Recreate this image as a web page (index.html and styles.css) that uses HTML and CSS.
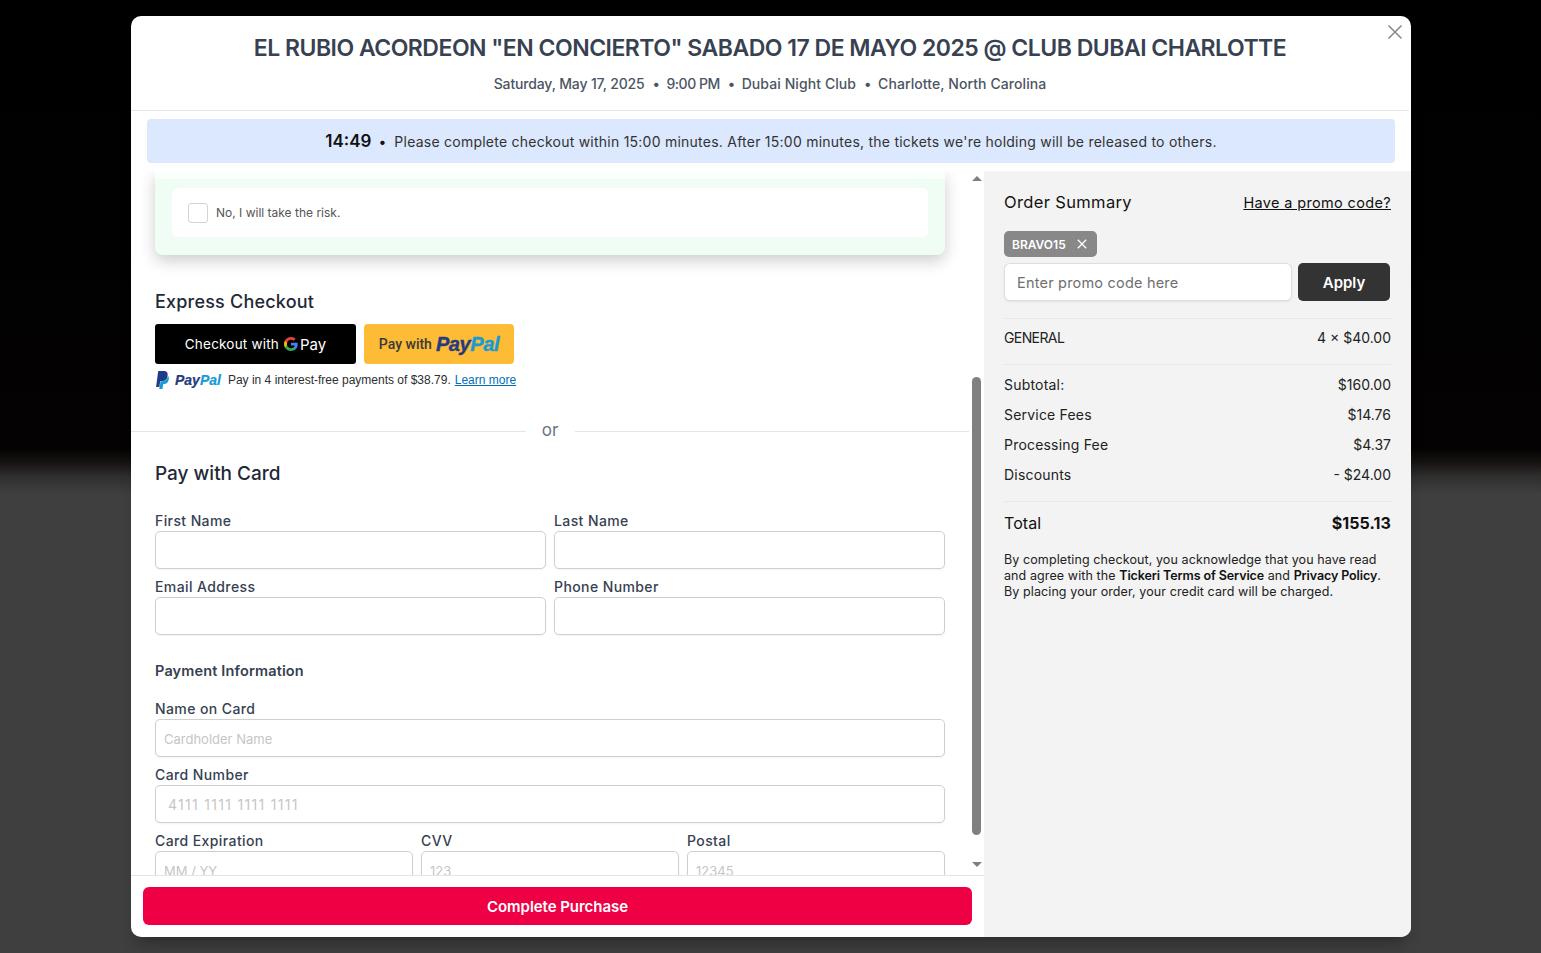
FILE: index.html
```html
<!DOCTYPE html>
<html lang="en">
<head>
<meta charset="utf-8">
<title>Checkout</title>
<link rel="stylesheet" href="styles.css">
</head>
<body>
<div class="modal">
  <button class="close" aria-label="Close">
    <svg width="16" height="16" viewBox="0 0 16 16"><path d="M1.5 1.5l13 13M14.5 1.5l-13 13" stroke="#8a8a8a" stroke-width="1.6" fill="none"/></svg>
  </button>
  <header class="head">
    <h1 class="title">EL RUBIO ACORDEON "EN CONCIERTO" SABADO 17 DE MAYO 2025 @ CLUB DUBAI CHARLOTTE</h1>
    <p class="meta"><span class="tight">Saturday, May 17, 2025</span><i>•</i><span class="tighter">9:00 PM</span><i>•</i><span class="open">Dubai Night Club</span><i>•</i><span class="open">Charlotte, North Carolina</span></p>
  </header>
  <div class="timer-wrap">
    <div class="timer"><b class="clock">14:49</b><span class="dot">•</span><span class="timer-text">Please complete checkout within 15:00 minutes. After 15:00 minutes, the tickets we're holding will be released to others.</span></div>
  </div>
  <div class="main">
    <div class="left">
      <div class="left-body">
        <div class="scroll">
          <div class="insure">
            <div class="insure-top"></div>
            <label class="insure-opt"><span class="check"></span><span class="insure-text">No, I will take the risk.</span></label>
          </div>
          <h2 class="h-express">Express Checkout</h2>
          <div class="express">
            <button class="gpay"><span class="gpay-text">Checkout with</span>
              <svg class="g" width="14" height="14" viewBox="0 0 24 24"><path fill="#4285F4" d="M23.5 12.3c0-.8-.1-1.600-.2-2.300H12v4.500h6.500c-.3 1.500-1.100 2.800-2.400 3.600v3h3.900c2.200-2.100 3.500-5.100 3.500-8.800z"/><path fill="#34A853" d="M12 24c3.200 0 6-1.100 8-2.900l-3.900-3c-1.100.7-2.500 1.200-4.100 1.200-3.100 0-5.800-2.100-6.700-5H1.300v3.100C3.300 21.300 7.300 24 12 24z"/><path fill="#FBBC05" d="M5.300 14.300c-.5-1.500-.5-3.100 0-4.600V6.600h-4c-1.700 3.300-1.700 7.500 0 10.800l4-3.100z"/><path fill="#EA4335" d="M12 4.800c1.800 0 3.300.6 4.600 1.800l3.400-3.400C17.900 1.200 15.200 0 12 0 7.300 0 3.300 2.700 1.300 6.600l4 3.100c.9-2.800 3.600-4.900 6.700-4.900z"/></svg>
              <span class="gpay-pay">Pay</span></button>
            <button class="ppbtn"><span class="pp-with">Pay with</span><span class="pp-logo"><b class="pp-a">Pay</b><b class="pp-b">Pal</b></span></button>
          </div>
          <div class="pp-msg">
            <svg class="pp-mono" width="15" height="18" viewBox="0 0 24 24" preserveAspectRatio="none"><path fill="#1f3c88" d="M7.076 21.337H2.47a.641.641 0 0 1-.633-.74L4.944.901C5.026.382 5.474 0 5.998 0h7.46c2.57 0 4.578.543 5.69 1.81 1.01 1.15 1.304 2.42 1.012 4.287-.023.143-.047.288-.077.437-.983 5.05-4.349 6.797-8.647 6.797h-2.19c-.524 0-.968.382-1.05.9l-1.12 7.106z"/><path fill="#179bd7" d="M21.222 6.917a3.35 3.35 0 0 0-.607-.541c-.013.076-.026.175-.041.254-.93 4.778-4.005 7.201-9.138 7.201h-2.19a.563.563 0 0 0-.556.479l-1.187 7.527h-.506l-.24 1.516a.56.56 0 0 0 .554.647h3.882c.46 0 .85-.334.922-.788.06-.26.76-4.852.816-5.09a.932.932 0 0 1 .923-.788h.58c3.76 0 6.705-1.528 7.565-5.946.36-1.847.174-3.388-.777-4.471z"/></svg>
            <span class="pp-small"><b class="pp-a">Pay</b><b class="pp-b">Pal</b></span>
            <span class="pp-copy">Pay in 4 interest-free payments of $38.79.</span>
            <a class="pp-learn">Learn more</a>
          </div>
          <div class="divider"><span class="line"></span><span class="or">or</span><span class="line"></span></div>
          <h2 class="h-card">Pay with Card</h2>
          <div class="grid2 form-first">
            <div class="field"><label>First Name</label><input type="text"></div>
            <div class="field"><label>Last Name</label><input type="text"></div>
            <div class="field"><label>Email Address</label><input type="text"></div>
            <div class="field"><label>Phone Number</label><input type="text"></div>
          </div>
          <h3 class="h-pay">Payment Information</h3>
          <div class="stack">
            <div class="field"><label>Name on Card</label><input class="ph-sm" type="text" placeholder="Cardholder Name"></div>
            <div class="field"><label>Card Number</label><input class="ph-card" type="text" placeholder="4111 1111 1111 1111"></div>
            <div class="grid3">
              <div class="field"><label>Card Expiration</label><input class="ph-sm" type="text" placeholder="MM / YY"></div>
              <div class="field"><label>CVV</label><input class="ph-sm" type="text" placeholder="123"></div>
              <div class="field"><label>Postal</label><input class="ph-sm" type="text" placeholder="12345"></div>
            </div>
          </div>
        </div>
        <div class="scrollbar">
          <span class="arrow up"></span>
          <span class="thumb"></span>
          <span class="arrow down"></span>
        </div>
      </div>
      <div class="foot"><button class="buy">Complete Purchase</button></div>
    </div>
    <aside class="right">
      <div class="sum-head"><h2 class="sum-title">Order Summary</h2><a class="promo-link">Have a promo code?</a></div>
      <div class="chip"><span>BRAVO15</span><svg width="10" height="10" viewBox="0 0 10 10"><path d="M.8.8l8.400 8.400M9.200.8L.8 9.200" stroke="#fff" stroke-width="1.300" fill="none"/></svg></div>
      <div class="promo-row"><input class="promo-input" type="text" placeholder="Enter promo code here"><button class="apply">Apply</button></div>
      <div class="row r-general"><span class="caps">GENERAL</span><span>4 × $40.00</span></div>
      <div class="fees">
        <div class="row"><span class="lbl">Subtotal:</span><span>$160.00</span></div>
        <div class="row"><span class="lbl">Service Fees</span><span>$14.76</span></div>
        <div class="row"><span class="lbl">Processing Fee</span><span>$4.37</span></div>
        <div class="row"><span class="lbl">Discounts</span><span>- $24.00</span></div>
      </div>
      <div class="total"><span>Total</span><b>$155.13</b></div>
      <p class="legal">By completing checkout, you acknowledge that you have read and agree with the <b>Tickeri Terms of Service</b> and <b>Privacy Policy</b>. By placing your order, your credit card will be charged.</p>
    </aside>
  </div>
</div>
</body>
</html>
```
FILE: styles.css
```css
* { box-sizing: border-box; }
html, body { margin: 0; height: 100%; }
body {
  height: 953px;
  overflow: hidden;
  padding: 16px 130px 16px 131px;
  background: linear-gradient(#000 0, #040202 448px, #161210 462px, #2e2e2e 476px, #3f3f3f 494px, #3f3f3f 100%);
  font-family: Inter, "Noto Sans", sans-serif;
  color: #111;
}
h1, h2, h3, p { margin: 0; }
button { font-family: inherit; border: 0; padding: 0; cursor: pointer; }
.modal {
  position: relative;
  height: 921px;
  display: flex;
  flex-direction: column;
  background: #fff;
  border-radius: 10px;
  overflow: hidden;
  box-shadow: 0 12px 16px -6px rgba(0,0,0,.3);
}
.close { position: absolute; top: 8px; right: 8px; width: 16px; height: 16px; background: none; }
.head { height: 95px; padding-top: 16px; border-bottom: 1px solid #e5e5e5; text-align: center; margin-right: 2px; }
.title { font-size: 23px; line-height: 32px; font-weight: 600; color: #374151; letter-spacing: -.5px; }
.meta { margin-top: 10px; font-size: 14px; line-height: 20px; font-weight: 500; color: #4b5563; display: flex; justify-content: center; gap: 8px; }
.meta i { font-style: normal; width: 6px; text-align: center; }
.meta .tight { letter-spacing: -.15px; }
.meta .tighter { letter-spacing: -.5px; }
.meta .open { letter-spacing: .08px; }
.timer-wrap { padding: 8px 16px; height: 60px; }
.timer { height: 44px; background: #dbe8fd; border-radius: 4px; display: flex; align-items: center; justify-content: center; }
.clock { font-size: 17px; font-weight: 600; color: #111; }
.dot { margin: 0 8px 0 7px; font-size: 14px; }
.timer-text { font-size: 14px; color: #333; letter-spacing: .24px; }
.main { flex: 1; display: flex; min-height: 0; }
.left { width: 853px; display: flex; flex-direction: column; }
.left-body { flex: 1; display: flex; min-height: 0; }
.scroll { width: 838px; padding: 0 24px; overflow: hidden; }
.insure { height: 84px; background: #f0fdf4; padding: 0 17px; border-radius: 0 0 8px 8px; box-shadow: 0 6px 16px rgba(0,0,0,.2); }
.insure-top { height: 8px; margin: 0 -17px 9px; background: #fbfffc; }
.insure-opt { height: 49px; background: #fff; border-radius: 6px; display: flex; align-items: center; padding-left: 16px; gap: 8px; }
.check { width: 20px; height: 20px; border: 1px solid #d4d4d4; border-radius: 3px; }
.insure-text { font-size: 12px; color: #555; }
.h-express { margin-top: 33px; font-size: 18px; line-height: 28px; font-weight: 500; color: #1f2937; letter-spacing: .2px; }
.express { margin-top: 8px; display: flex; gap: 8px; }
.gpay { width: 201px; height: 40px; background: #000; border-radius: 3px; color: #fff; display: flex; align-items: center; justify-content: center; }
.gpay-text { font-size: 13.500px; letter-spacing: .2px; }
.g { margin-left: 5px; }
.gpay-pay { margin-left: 2px; font-size: 15px; }
.ppbtn { width: 150px; height: 40px; background: #fdbb36; border-radius: 4px; display: flex; align-items: center; justify-content: center; gap: 4px; }
.pp-with { font-family: Roboto, sans-serif; font-size: 14px; font-weight: 500; color: #3a3a3a; }
.pp-logo { font-family: "Liberation Sans", sans-serif; font-style: italic; font-size: 20px; letter-spacing: -.4px; -webkit-text-stroke: .4px; }
.pp-a { color: #253b80; font-weight: 700; }
.pp-b { color: #179bd7; font-weight: 700; }
.pp-msg { margin-top: 7px; height: 18px; display: flex; align-items: center; }
.pp-mono { flex: none; }
.pp-small { margin-left: 5px; font-family: "Liberation Sans", sans-serif; font-style: italic; font-size: 14px; -webkit-text-stroke: .2px; }
.pp-copy { margin-left: 7px; font-family: "Liberation Sans", sans-serif; font-size: 12px; color: #2c2e2f; }
.pp-learn { margin-left: 4px; font-family: "Liberation Sans", sans-serif; font-size: 12px; color: #0070ba; text-decoration: underline; }
.divider { margin: 30px -24px 0; height: 24px; display: flex; align-items: center; }
.line { flex: 1; height: 1px; background: #e5e5e5; }
.or { width: 49px; text-align: center; font-size: 17px; line-height: 22px; margin-bottom: 2px; color: #6b7280; }
.h-card { margin-top: 17px; font-size: 19px; line-height: 28px; font-weight: 500; color: #1f2937; }
.grid2 { display: grid; grid-template-columns: 1fr 1fr; gap: 9px 8px; }
.form-first { margin-top: 24px; }
.field { display: flex; flex-direction: column; }
.field label { font-size: 14px; line-height: 18px; margin-bottom: 1px; font-weight: 500; color: #374151; letter-spacing: .4px; }
.field input { height: 38px; border: 1px solid #cfcfcf; border-radius: 5px; background: #fff; outline: 0; font: 13px Inter, sans-serif; padding: 1px 8px 0; width: 100%; box-shadow: 0 1px 2px rgba(0,0,0,.05); }
.field input::placeholder { color: #c6c6c6; }
.field .ph-card { padding-left: 12px; font-size: 14px; letter-spacing: 1.3px; }
.h-pay { margin-top: 26px; font-size: 14.500px; line-height: 20px; font-weight: 600; color: #374151; letter-spacing: .15px; }
.stack { margin-top: 19px; display: flex; flex-direction: column; gap: 9px; }
.grid3 { display: grid; grid-template-columns: repeat(3, 1fr); gap: 8px; }
.scrollbar { width: 15px; display: flex; flex-direction: column; align-items: center; position: relative; }
.arrow { position: absolute; left: 3px; width: 0; height: 0; border-left: 5px solid transparent; border-right: 5px solid transparent; }
.arrow.up { top: 5px; border-bottom: 5px solid #808080; }
.arrow.down { bottom: 8px; border-top: 5px solid #808080; }
.thumb { margin-top: 206px; width: 9px; height: 458px; border-radius: 5px; background: #808080; }
.foot { height: 62px; border-top: 1px solid #e5e5e5; padding: 11px 12px; }
.buy { width: 100%; height: 38px; border-radius: 6px; background: #ef0044; color: #fff; font-size: 15px; font-weight: 600; letter-spacing: -.05px; }
.right { flex: 1; background: #f3f3f3; padding: 19px 20px 0; }
.sum-head { display: flex; justify-content: space-between; align-items: center; height: 24px; }
.sum-title { font-size: 16.500px; font-weight: 400; color: #111; letter-spacing: .35px; }
.promo-link { font-size: 14.500px; color: #111; text-decoration: underline; letter-spacing: .35px; margin-top: 1px; }
.chip { margin-top: 17px; width: 93px; height: 26px; background: #888; border-radius: 5px; color: #fff; font-size: 12px; font-weight: 600; display: flex; align-items: center; gap: 11px; padding-left: 8px; }
.promo-row { margin-top: 6px; display: flex; gap: 6px; padding-bottom: 17px; border-bottom: 1px solid #e8e8e8; }
.promo-input { width: 288px; height: 38px; border: 1px solid #dedede; border-radius: 6px; background: #fff; padding: 0 12px; font: 14.500px Inter, sans-serif; letter-spacing: .2px; outline: 0; box-shadow: 0 1px 2px rgba(0,0,0,.08); }
.promo-input::placeholder { color: #6f6f6f; }
.apply { width: 92px; height: 38px; background: #333; color: #fff; border-radius: 5px; font-size: 15px; font-weight: 600; }
.row { display: flex; justify-content: space-between; font-size: 14px; line-height: 20px; color: #222; }
.row .caps { letter-spacing: -.6px; }
.row .lbl { letter-spacing: .2px; }
.r-general { padding: 9px 0 16px; border-bottom: 1px solid #e8e8e8; }
.fees { padding: 10px 0 16px; display: flex; flex-direction: column; gap: 10px; border-bottom: 1px solid #e8e8e8; }
.total { margin-top: 9px; display: flex; justify-content: space-between; font-size: 16px; line-height: 24px; color: #111; letter-spacing: .1px; }
.total b { font-weight: 700; }
.legal { margin-top: 17px; font-size: 12.500px; line-height: 16px; color: #222; letter-spacing: .1px; }
.legal b { font-weight: 600; color: #111; letter-spacing: -.1px; }
```
